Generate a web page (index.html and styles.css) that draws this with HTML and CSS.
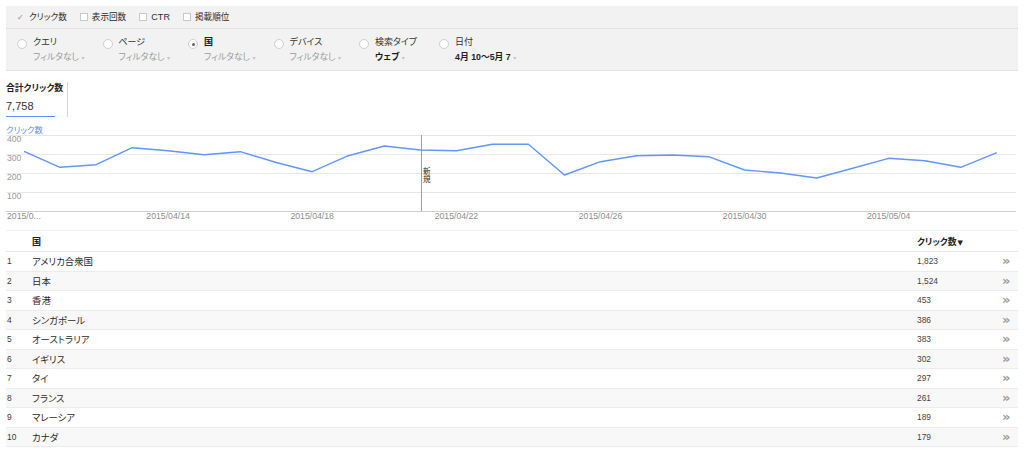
FILE: index.html
```html
<!DOCTYPE html>
<html lang="ja">
<head>
<meta charset="utf-8">
<title>検索アナリティクス</title>
<link rel="stylesheet" href="styles.css">
</head>
<body>
<div class="page">
  <div class="toolbar">
    <div class="metrics">
      <span class="metric"><span class="check">✓</span><span class="mtext">クリック数</span></span>
      <span class="metric"><span class="box"></span><span class="mtext">表示回数</span></span>
      <span class="metric"><span class="box"></span><span class="mtext lat">CTR</span></span>
      <span class="metric"><span class="box"></span><span class="mtext">掲載順位</span></span>
    </div>
    <div class="dims">
      <div class="dim"><span class="radio"></span><div><div class="dname">クエリ</div><div class="dsub">フィルタなし <span class="caret">▾</span></div></div></div>
      <div class="dim"><span class="radio"></span><div><div class="dname">ページ</div><div class="dsub">フィルタなし <span class="caret">▾</span></div></div></div>
      <div class="dim"><span class="radio checked"></span><div><div class="dname strong">国</div><div class="dsub">フィルタなし <span class="caret">▾</span></div></div></div>
      <div class="dim"><span class="radio"></span><div><div class="dname">デバイス</div><div class="dsub">フィルタなし <span class="caret">▾</span></div></div></div>
      <div class="dim narrow"><span class="radio"></span><div><div class="dname">検索タイプ</div><div class="dsub set">ウェブ <span class="caret">▾</span></div></div></div>
      <div class="dim"><span class="radio"></span><div><div class="dname">日付</div><div class="dsub set">4月 10〜5月 7 <span class="caret">▾</span></div></div></div>
    </div>
  </div>

  <div class="summary">
    <div class="summary-cell">
      <div class="total">
        <div class="tlabel">合計クリック数</div>
        <div class="tvalue">7,758</div>
      </div>
    </div>
  </div>

  <svg class="chart" width="1012" height="100" viewBox="0 0 1012 100">
    <text class="legend" x="0" y="10">クリック数</text>
    <g class="grid">
      <line x1="0" y1="12.5" x2="1010" y2="12.5"/>
      <line x1="0" y1="31.5" x2="1010" y2="31.5"/>
      <line x1="0" y1="50.5" x2="1010" y2="50.5"/>
      <line x1="0" y1="69.5" x2="1010" y2="69.5"/>
    </g>
    <line class="axis" x1="0" y1="88.5" x2="1010" y2="88.5"/>
    <g class="ylab">
      <text x="1" y="18.5">400</text>
      <text x="1" y="37.5">300</text>
      <text x="1" y="56.5">200</text>
      <text x="1" y="75.5">100</text>
    </g>
    <line class="anno" x1="415.5" y1="12" x2="415.5" y2="88"/>
    <text class="annotext" x="417" y="51">新</text>
    <text class="annotext" x="417" y="59">規</text>
    <polyline class="series" points="18,28.3 54,44.3 90.1,41.7 126.1,24.7 162.1,27.7 198.2,31.7 234.2,28.7 270.2,39.5 306.2,48.7 342.3,32.7 378.3,23 414.3,27 450.4,27.7 486.4,21.3 522.4,21.3 558.5,52 594.5,38.7 630.5,32.7 666.5,32 702.6,33.7 738.6,47 774.6,50 810.7,55 846.7,45.3 882.7,35.3 918.8,37.7 954.8,44.3 990.8,29.7"/>
    <g class="xlab">
      <text x="1" y="96">2015/0...</text>
      <text class="mid" x="162.1" y="96">2015/04/14</text>
      <text class="mid" x="306.2" y="96">2015/04/18</text>
      <text class="mid" x="450.4" y="96">2015/04/22</text>
      <text class="mid" x="594.5" y="96">2015/04/26</text>
      <text class="mid" x="738.6" y="96">2015/04/30</text>
      <text class="mid" x="882.7" y="96">2015/05/04</text>
    </g>
  </svg>

  <table class="results">
    <colgroup><col class="c-num"><col><col class="c-val"><col class="c-go"></colgroup>
    <thead>
      <tr><th></th><th class="h-name"><span class="hbox">国</span></th><th class="h-val">クリック数<span class="sort">▼</span></th><th></th></tr>
    </thead>
    <tbody>
      <tr><td class="num">1</td><td class="name">アメリカ合衆国</td><td class="val">1,823</td><td class="go">»</td></tr>
      <tr><td class="num">2</td><td class="name">日本</td><td class="val">1,524</td><td class="go">»</td></tr>
      <tr><td class="num">3</td><td class="name">香港</td><td class="val">453</td><td class="go">»</td></tr>
      <tr><td class="num">4</td><td class="name">シンガポール</td><td class="val">386</td><td class="go">»</td></tr>
      <tr><td class="num">5</td><td class="name">オーストラリア</td><td class="val">383</td><td class="go">»</td></tr>
      <tr><td class="num">6</td><td class="name">イギリス</td><td class="val">302</td><td class="go">»</td></tr>
      <tr><td class="num">7</td><td class="name">タイ</td><td class="val">297</td><td class="go">»</td></tr>
      <tr><td class="num">8</td><td class="name">フランス</td><td class="val">261</td><td class="go">»</td></tr>
      <tr><td class="num">9</td><td class="name">マレーシア</td><td class="val">189</td><td class="go">»</td></tr>
      <tr><td class="num">10</td><td class="name">カナダ</td><td class="val">179</td><td class="go">»</td></tr>
    </tbody>
  </table>
</div>
</body>
</html>
```

FILE: styles.css
```css
html, body {
  margin: 0;
  padding: 0;
  background: #ffffff;
}

body {
  font-family: "Liberation Sans", "Noto Sans CJK JP", sans-serif;
  font-feature-settings: "palt";
  color: #333333;
  font-size: 9px;
}

.page {
  padding: 0 6px;
}

/* ---------- toolbar ---------- */
.toolbar {
  margin-top: 6px;
  background: #f2f2f2;
}

.metrics {
  height: 22px;
  display: flex;
  align-items: center;
  gap: 13px;
  padding-left: 11px;
  border-bottom: 1px solid #e2e2e2;
}

.metric {
  display: flex;
  align-items: center;
  gap: 4px;
  color: #2b2b2b;
}

.mtext {
  font-size: 8.6px;
  line-height: 12px;
}

.mtext.lat {
  font-size: 9px;
  letter-spacing: 0.1px;
}

.check {
  font-family: "DejaVu Sans", sans-serif;
  font-size: 8px;
  color: #8a8a8a;
  width: 8px;
}

.box {
  width: 6px;
  height: 6px;
  border: 1px solid #c9c9c9;
  background: #ffffff;
}

.dims {
  height: 41px;
  display: flex;
  padding-left: 11px;
  border-bottom: 1px solid #e2e2e2;
  box-sizing: content-box;
}

.dim {
  width: 85.5px;
  display: flex;
  gap: 6px;
  padding-top: 7px;
}

.dim.narrow {
  width: 80px;
}

.radio {
  width: 8px;
  height: 8px;
  margin-top: 3px;
  border: 1px solid #cfcfcf;
  border-radius: 50%;
  background: #ffffff;
  position: relative;
  flex: none;
}

.radio.checked::after {
  content: "";
  position: absolute;
  left: 2.5px;
  top: 2.5px;
  width: 3px;
  height: 3px;
  border-radius: 50%;
  background: #666666;
}

.dname {
  font-size: 9px;
  line-height: 12px;
  color: #333333;
}

.dname.strong {
  font-weight: bold;
  color: #222222;
}

.dsub {
  margin-top: 3px;
  font-size: 8.8px;
  line-height: 12px;
  color: #9a9a9a;
  white-space: nowrap;
}

.dsub.set {
  font-weight: bold;
  color: #1f1f1f;
}

.caret {
  font-family: "DejaVu Sans", sans-serif;
  font-size: 6px;
  font-weight: normal;
  color: #c4c4c4;
}

/* ---------- summary ---------- */
.summary {
  display: flex;
  padding-top: 11px;
}

.summary-cell {
  height: 35px;
  padding-right: 12px;
  border-right: 1px solid #d6d6d6;
}

.total {
  width: 49px;
  height: 34px;
  border-bottom: 1px solid #5b8ff9;
}

.tlabel {
  font-size: 8.8px;
  line-height: 12px;
  font-weight: bold;
  color: #222222;
  white-space: nowrap;
}

.tvalue {
  margin-top: 5px;
  font-size: 11px;
  line-height: 14px;
  color: #333333;
}

/* ---------- chart ---------- */
.chart {
  display: block;
  margin-top: 6px;
  overflow: visible;
}

.chart text {
  font-family: "Liberation Sans", "Noto Sans CJK JP", sans-serif;
}

.legend {
  font-size: 8.4px;
  fill: #5b8ff9;
}

.grid line {
  stroke: #e8e8e8;
  stroke-width: 1;
}

.axis {
  stroke: #cfcfcf;
  stroke-width: 1;
}

.ylab text {
  font-size: 8.6px;
  fill: #999999;
}

.xlab text {
  font-size: 8.7px;
  fill: #8c8c8c;
}

.xlab text.mid {
  text-anchor: middle;
}

.anno {
  stroke: #a0a0a0;
  stroke-width: 1;
}

.annotext {
  font-size: 7.5px;
  fill: #222222;
}

.series {
  fill: none;
  stroke: #6196fa;
  stroke-width: 1.4;
  stroke-linejoin: round;
}

/* ---------- table ---------- */
.results {
  width: 1012px;
  margin-top: 7px;
  border-collapse: collapse;
  table-layout: fixed;
}

.c-num { width: 26px; }
.c-val { width: 81px; }
.c-go { width: 20px; }

.results th {
  height: 20px;
  padding: 0;
  text-align: left;
  font-weight: bold;
  color: #222222;
  border-top: 1px solid #f0f0f0;
  border-bottom: 1px solid #e6e6e6;
}

.h-name .hbox {
  font-size: 9px;
}

.h-val {
  font-size: 8.8px;
  white-space: nowrap;
}

.sort {
  font-family: "DejaVu Sans", sans-serif;
  font-size: 7px;
  margin-left: 1px;
}

.results td {
  height: 18.5px;
  padding: 0;
  border-bottom: 1px solid #ececec;
  white-space: nowrap;
}

.results tbody tr:nth-child(even) td {
  background: #f8f8f8;
}

.num {
  padding-left: 1px !important;
  font-size: 8.4px;
  color: #3a3a3a;
}

.name {
  font-size: 9.4px;
  color: #2a2a2a;
}

.val {
  font-size: 8.4px;
  color: #444444;
}

.go {
  font-family: "DejaVu Sans", sans-serif;
  font-size: 13px;
  font-weight: bold;
  color: #9c9c9c;
  padding-left: 4px !important;
  line-height: 10px;
}
```
